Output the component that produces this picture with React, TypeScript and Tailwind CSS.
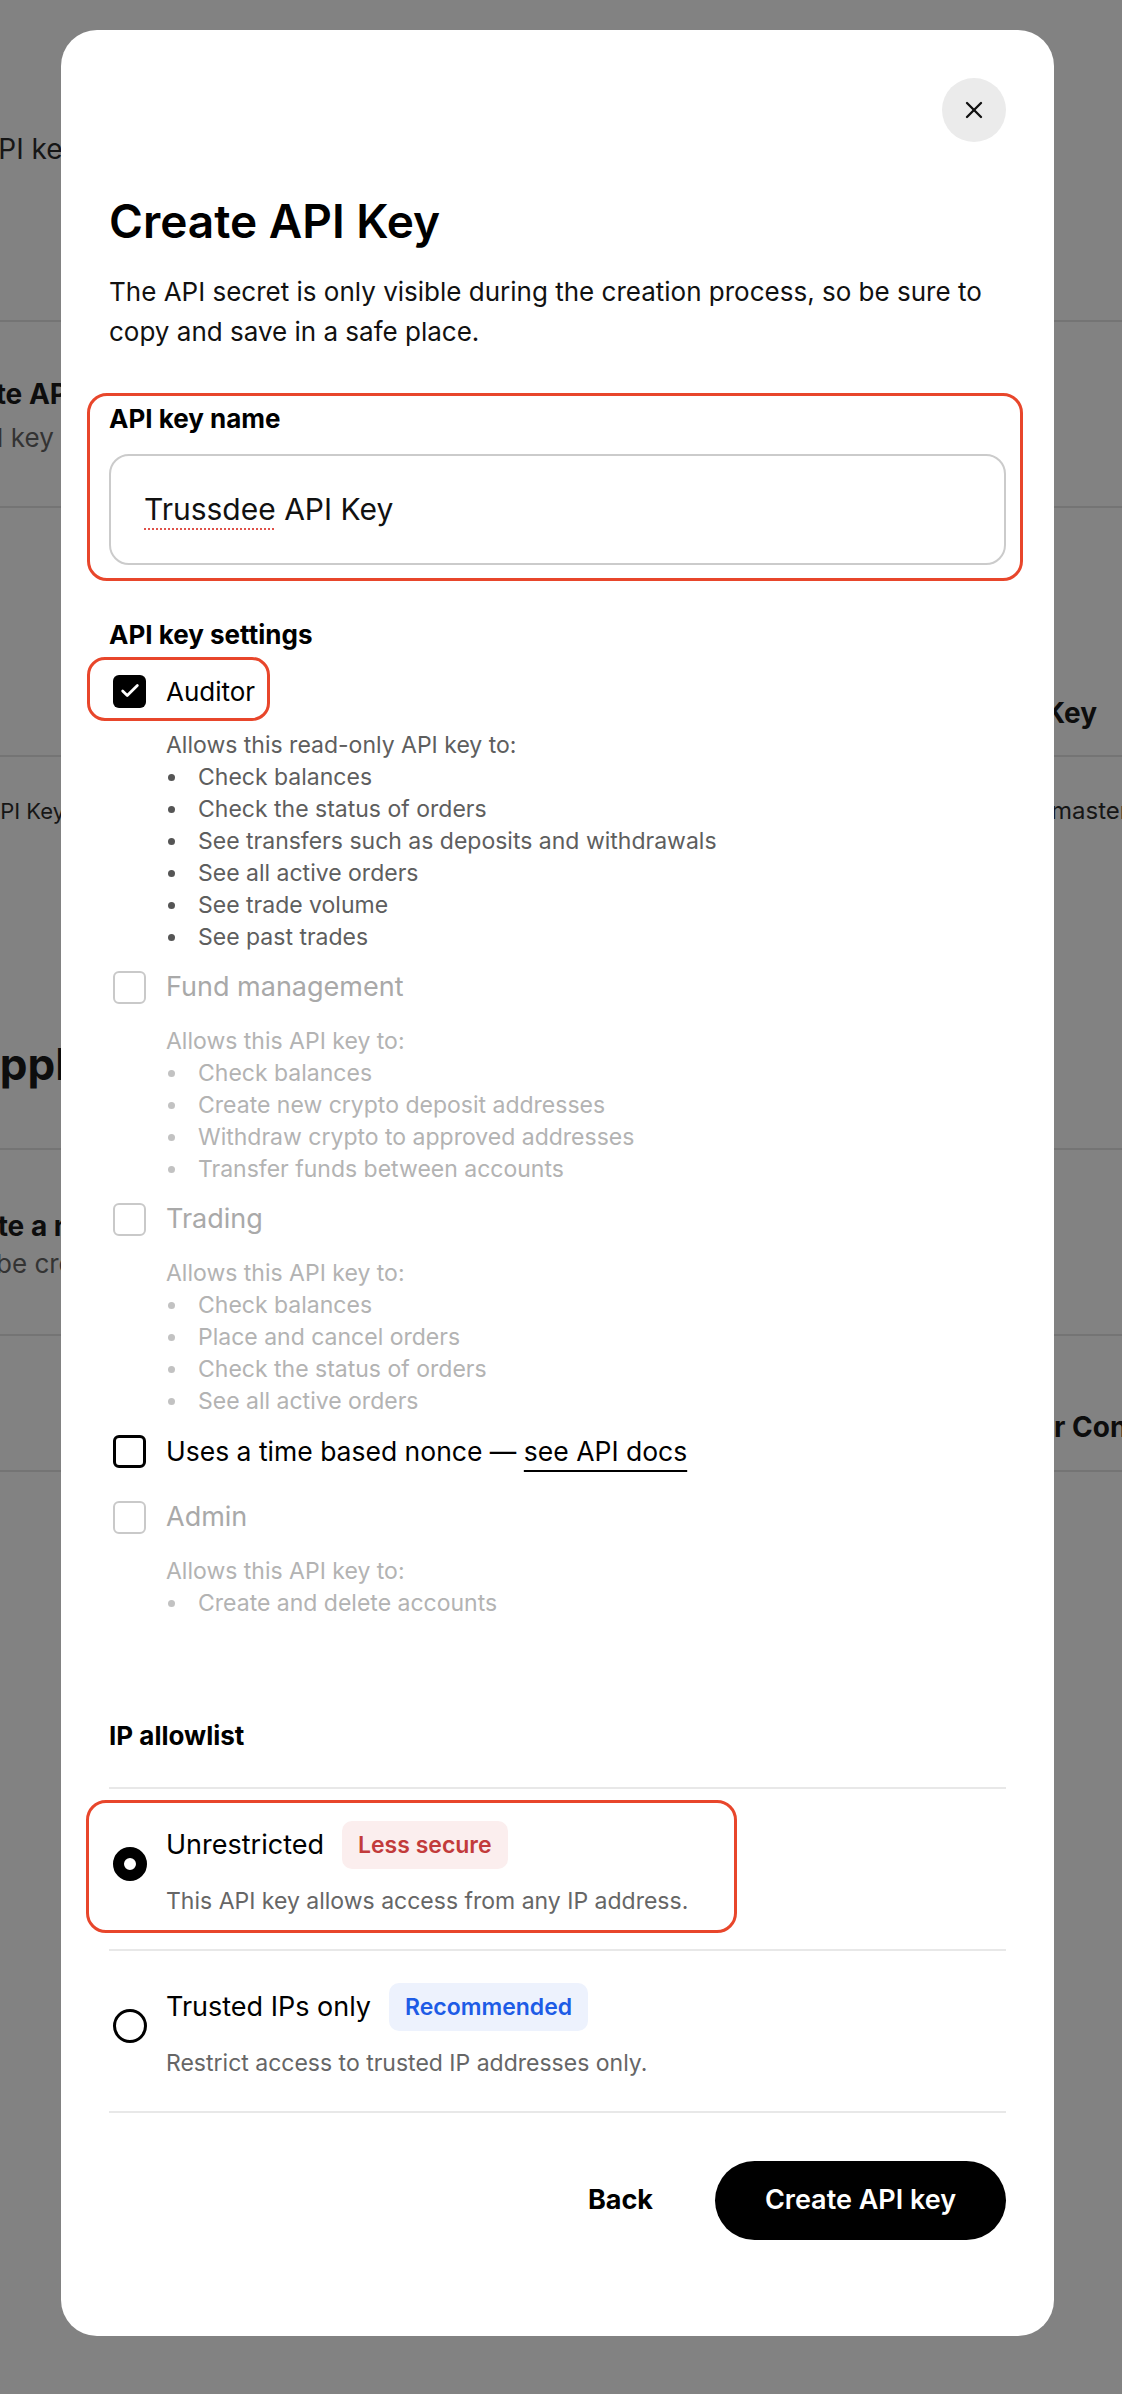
import React from "react";
import { Check, X } from "lucide-react";

function Box({ state }: { state: "checked" | "empty" | "disabled" }) {
  if (state === "checked")
    return (
      <div className="flex h-[33px] w-[33px] shrink-0 items-center justify-center rounded-[6px] bg-black">
        <Check size={22} strokeWidth={3} color="white" />
      </div>
    );
  if (state === "empty")
    return <div className="h-[33px] w-[33px] shrink-0 rounded-[6px] border-[3px] border-black" />;
  return <div className="h-[33px] w-[33px] shrink-0 rounded-[6px] border-[2.5px] border-[#c9c9c9]" />;
}

function Perms({ intro, items, disabled }: { intro: string; items: string[]; disabled?: boolean }) {
  return (
    <div className={`ml-[57px] mt-[21px] text-[23px] leading-[32px] ${disabled ? "text-[#b3b3b3]" : "text-[#5e5e5e]"}`}>
      <div>{intro}</div>
      {items.map((t) => (
        <div key={t} className="flex items-center">
          <span className={`ml-[2px] mr-[23px] h-[7px] w-[7px] shrink-0 rounded-full ${disabled ? "bg-[#c2c2c2]" : "bg-[#555]"}`} />
          <span>{t}</span>
        </div>
      ))}
    </div>
  );
}

function OptionRow({
  selected,
  title,
  badge,
  badgeCls,
  desc,
  outlined,
}: {
  selected: boolean;
  title: string;
  badge: string;
  badgeCls: string;
  desc: string;
  outlined: boolean;
}) {
  return (
    <div className="pb-[16px] pt-[11px]">
      <div
        className={`-ml-[23px] flex w-[651px] items-center gap-[19px] rounded-[20px] border-[3px] pb-[13px] pl-[24px] pt-[18px] ${
          outlined ? "border-[#e8462b]" : "border-transparent"
        }`}
      >
        <div
          className={`-mt-[10px] h-[34px] w-[34px] shrink-0 rounded-full border-black ${
            selected ? "border-[11px]" : "border-[3px]"
          }`}
        />
        <div className="flex flex-col">
          <div className="flex h-[48px] items-center gap-[18px]">
            <span className="text-[27px] text-black">{title}</span>
            <span className={`flex h-[48px] items-center rounded-[10px] px-[16px] text-[23px] font-semibold ${badgeCls}`}>
              {badge}
            </span>
          </div>
          <div className="mt-[16px] text-[23px] leading-[32px] text-[#666]">{desc}</div>
        </div>
      </div>
    </div>
  );
}

function Background() {
  const line = <div className="h-[2px] w-full bg-[#747474]" />;
  return (
    <div className="flex flex-col">
      <div className="h-[320px] pt-[131px]">
        <div className="-ml-[21px] text-[28px] leading-[36px] text-[#161616]">API keys</div>
      </div>
      {line}
      <div className="h-[184px] pt-[54px]">
        <div className="-ml-[69px] text-[28px] font-bold leading-[36px] text-[#0d0d0d]">Create API Key</div>
        <div className="-ml-[38px] mt-[8px] text-[26px] leading-[36px] text-[#333]">API key with custom permissions</div>
      </div>
      {line}
      <div className="flex h-[247px] justify-end pr-[25px] pt-[187px]">
        <div className="text-[28px] font-bold leading-[36px] text-[#0d0d0d]">Create API Key</div>
      </div>
      {line}
      <div className="flex h-[391px] flex-col">
        <div className="mt-[36px] flex items-center">
          <div className="-ml-[15px] w-[200px] shrink-0 text-[22px] leading-[36px] text-[#161616]">API Key</div>
          <div className="ml-[866px] shrink-0 whitespace-nowrap text-[24px] leading-[36px] text-[#161616]">master key</div>
        </div>
        <div className="-ml-[33px] mt-[207px] text-[44px] font-bold leading-[56px] text-[#0d0d0d]">Applications</div>
      </div>
      {line}
      <div className="h-[184px] pt-[58px]">
        <div className="-ml-[67px] text-[28px] font-bold leading-[36px] text-[#0d0d0d]">Create a new app</div>
        <div className="-ml-[4px] mt-[4px] text-[26px] leading-[32px] text-[#333]">be created</div>
      </div>
      {line}
      <div className="flex h-[134px] pt-[73px]">
        <div className="ml-[988px] shrink-0 whitespace-nowrap text-[28px] font-bold leading-[36px] text-[#0d0d0d]">Other Connections</div>
      </div>
      {line}
    </div>
  );
}

export default function App() {
  return (
    <div className="relative h-[2394px] w-full overflow-hidden bg-[#828282] font-['Inter','Noto_Sans',sans-serif]">
      <Background />
      <div className="absolute left-[61px] top-[30px] flex w-[993px] flex-col rounded-[36px] bg-white px-[48px] pb-[96px] pt-[48px]">
        <button className="flex h-[64px] w-[64px] items-center justify-center self-end rounded-full bg-[#ebebeb]">
          <X size={28} strokeWidth={2} color="#111" />
        </button>
        <h1 className="mt-[53px] text-[46px] font-semibold leading-[53px] text-black">Create API Key</h1>
        <p className="mt-[24px] text-[26px] leading-[40px] text-[#111]">
          The API secret is only visible during the creation process, so be sure to copy and save in a safe place.
        </p>

        <div className="-ml-[22px] -mr-[17px] mt-[41px] rounded-[20px] border-[3px] border-[#e8462b] pb-[13px] pl-[19px] pr-[14px] pt-[7px]">
          <div className="text-[26px] font-bold leading-[32px] text-black">API key name</div>
          <div className="mt-[19px] flex h-[111px] items-center rounded-[20px] border-2 border-[#cbcbcb] pl-[33px] text-[30px] text-[#111]">
            <span className="underline decoration-[#e0524a] decoration-dotted decoration-2 underline-offset-[8px]">Trussdee</span>
            <span>&nbsp;API Key</span>
          </div>
        </div>

        <div className="mt-[38px] text-[26px] font-bold leading-[32px] text-black">API key settings</div>

        <div className="-ml-[22px] mt-[6px] flex h-[64px] items-center gap-[20px] self-start rounded-[18px] border-[3px] border-[#e8462b] pl-[23px] pr-[12px] pt-[4px]">
          <Box state="checked" />
          <span className="text-[26px] text-black">Auditor</span>
        </div>
        <div className="-mt-[13px]">
          <Perms
            intro="Allows this read-only API key to:"
            items={[
              "Check balances",
              "Check the status of orders",
              "See transfers such as deposits and withdrawals",
              "See all active orders",
              "See trade volume",
              "See past trades",
            ]}
          />
        </div>

        <div className="ml-[4px] mt-[18px] flex h-[33px] items-center gap-[20px]">
          <Box state="disabled" />
          <span className="text-[27px] text-[#a9a9a9]">Fund management</span>
        </div>
        <Perms
          disabled
          intro="Allows this API key to:"
          items={[
            "Check balances",
            "Create new crypto deposit addresses",
            "Withdraw crypto to approved addresses",
            "Transfer funds between accounts",
          ]}
        />

        <div className="ml-[4px] mt-[18px] flex h-[33px] items-center gap-[20px]">
          <Box state="disabled" />
          <span className="text-[27px] text-[#a9a9a9]">Trading</span>
        </div>
        <Perms
          disabled
          intro="Allows this API key to:"
          items={["Check balances", "Place and cancel orders", "Check the status of orders", "See all active orders"]}
        />

        <div className="ml-[4px] mt-[18px] flex h-[33px] items-center gap-[20px]">
          <Box state="empty" />
          <span className="text-[26.5px] text-black">
            Uses a time based nonce —{" "}
            <span className="underline decoration-2 underline-offset-[9px]">see API docs</span>
          </span>
        </div>

        <div className="ml-[4px] mt-[33px] flex h-[33px] items-center gap-[20px]">
          <Box state="disabled" />
          <span className="text-[27px] text-[#a9a9a9]">Admin</span>
        </div>
        <Perms disabled intro="Allows this API key to:" items={["Create and delete accounts"]} />

        <div className="mt-[101px] text-[26px] font-bold leading-[32px] text-black">IP allowlist</div>
        <div className="mt-[35px] h-[2px] bg-[#e8e8e8]" />
        <OptionRow
          selected
          outlined
          title="Unrestricted"
          badge="Less secure"
          badgeCls="bg-[#fbeeee] text-[#c23b3b]"
          desc="This API key allows access from any IP address."
        />
        <div className="h-[2px] bg-[#e8e8e8]" />
        <OptionRow
          selected={false}
          outlined={false}
          title="Trusted IPs only"
          badge="Recommended"
          badgeCls="bg-[#edf2fd] text-[#1d5ce6]"
          desc="Restrict access to trusted IP addresses only."
        />
        <div className="h-[2px] bg-[#e8e8e8]" />

        <div className="mt-[48px] flex items-center justify-end gap-[62px]">
          <button className="text-[27px] font-bold text-black">Back</button>
          <button className="flex h-[79px] w-[291px] items-center justify-center rounded-full bg-black text-[27px] font-semibold text-white">
            Create API key
          </button>
        </div>
      </div>
    </div>
  );
}
